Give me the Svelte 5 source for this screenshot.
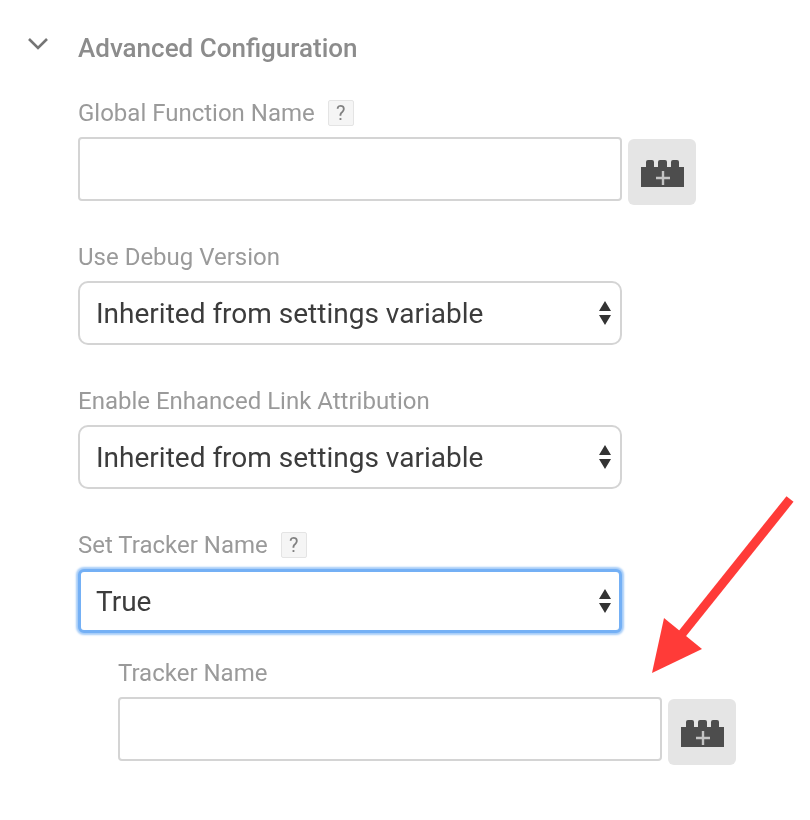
<script>
  const inherited = "Inherited from settings variable"
</script>

{#snippet brick()}
  <button class="var-btn" type="button" aria-label="Choose variable">
    <svg width="43" height="27" viewBox="0 0 43 27">
      <path fill="#4d4d4d" d="M0 7h5V2q0-2 2-2h4q2 0 2 2v5h4V2q0-2 2-2h5q2 0 2 2v5h4V2q0-2 2-2h4q2 0 2 2v5h5v20H0z" />
      <path fill="none" stroke="#c4c4c4" stroke-width="2.4" d="M22 11v14M15 18h14" />
    </svg>
  </button>
{/snippet}

{#snippet arrows()}
  <svg class="updown" width="14" height="24" viewBox="0 0 14 24">
    <path fill="#333" d="M7 0l6 10H1zM7 24L1 14h12z" />
  </svg>
{/snippet}

<div class="page">
  <div class="section-head">
    <svg class="chevron" width="20" height="12" viewBox="0 0 20 12">
      <path fill="none" stroke="#757575" stroke-width="2.6" d="M1 1L10 10L19 1" />
    </svg>
    <h2>Advanced Configuration</h2>
  </div>

  <div class="fields">
    <div class="field">
      <div class="label">Global Function Name <span class="help">?</span></div>
      <div class="row">
        <input type="text" />
        {@render brick()}
      </div>
    </div>

    <div class="field">
      <div class="label">Use Debug Version</div>
      <div class="select-wrap">
        <select><option>{inherited}</option></select>
        {@render arrows()}
      </div>
    </div>

    <div class="field">
      <div class="label">Enable Enhanced Link Attribution</div>
      <div class="select-wrap">
        <select><option>{inherited}</option></select>
        {@render arrows()}
      </div>
    </div>

    <div class="field">
      <div class="label">Set Tracker Name <span class="help">?</span></div>
      <div class="select-wrap">
        <select class="focused"><option>True</option></select>
        {@render arrows()}
      </div>
      <div class="field nested">
        <div class="label">Tracker Name</div>
        <div class="row">
          <input type="text" />
          {@render brick()}
        </div>
      </div>
    </div>
  </div>

  <!-- annotation drawn over the form -->
  <svg class="annotation" width="810" height="820" viewBox="0 0 810 820">
    <path fill="none" stroke="#ff3b38" stroke-width="9" d="M790 499L682 634" />
    <path fill="#ff3b38" d="M652 673L664 618L702 649z" />
  </svg>
</div>

<style>
  :global(body) {
    background: #fff;
  }

  .page {
    position: relative;
    width: 810px;
    height: 820px;
    box-sizing: border-box;
    padding: 32px 0 0 28px;
    font-family: Roboto, "Liberation Sans", sans-serif;
    overflow: hidden;
    filter: blur(0.7px);
  }

  .section-head {
    display: flex;
    align-items: flex-start;
    gap: 30px;
    height: 69px;
  }

  .chevron {
    margin-top: 6px;
    flex: none;
  }

  h2 {
    margin: 0;
    font-size: 26px;
    line-height: 32px;
    font-weight: 500;
    color: #8c8c8c;
  }

  .fields {
    display: flex;
    flex-direction: column;
    gap: 44px;
    padding-left: 50px;
  }

  .label {
    display: flex;
    align-items: center;
    gap: 13px;
    height: 24px;
    margin-bottom: 12px;
    font-size: 24px;
    color: #9a9a9a;
  }

  .help {
    display: inline-block;
    width: 26px;
    height: 26px;
    box-sizing: border-box;
    border: 1px solid #e4e4e4;
    background: #f5f5f5;
    border-radius: 2px;
    text-align: center;
    line-height: 24px;
    font-size: 20px;
    color: #808080;
  }

  .row {
    display: flex;
    align-items: flex-start;
    gap: 6px;
    height: 64px;
  }

  input,
  select {
    display: block;
    width: 544px;
    height: 64px;
    box-sizing: border-box;
    border: 2px solid #d4d4d4;
    background: #fff;
    outline: none;
    margin: 0;
  }

  input {
    flex: none;
    border-radius: 4px;
  }

  select {
    appearance: none;
    border-radius: 10px;
    padding: 0 16px;
    font-family: inherit;
    font-size: 28px;
    color: #3c3c3c;
  }

  select.focused {
    border: 3px solid #74b0f5;
    border-radius: 6px;
    box-shadow: 0 0 2px 2px #a5ccf8;
    padding: 0 15px;
  }

  .select-wrap {
    position: relative;
    width: 544px;
  }

  .updown {
    position: absolute;
    right: 10px;
    top: 20px;
  }

  .var-btn {
    flex: none;
    width: 68px;
    height: 66px;
    margin-top: 2px;
    padding: 3px 0 0;
    border: none;
    border-radius: 6px;
    background: #e5e5e5;
    display: flex;
    align-items: center;
    justify-content: center;
  }

  .nested {
    margin: 28px 0 0 40px;
  }

  .annotation {
    position: absolute;
    left: 0;
    top: 0;
    pointer-events: none;
  }
</style>
